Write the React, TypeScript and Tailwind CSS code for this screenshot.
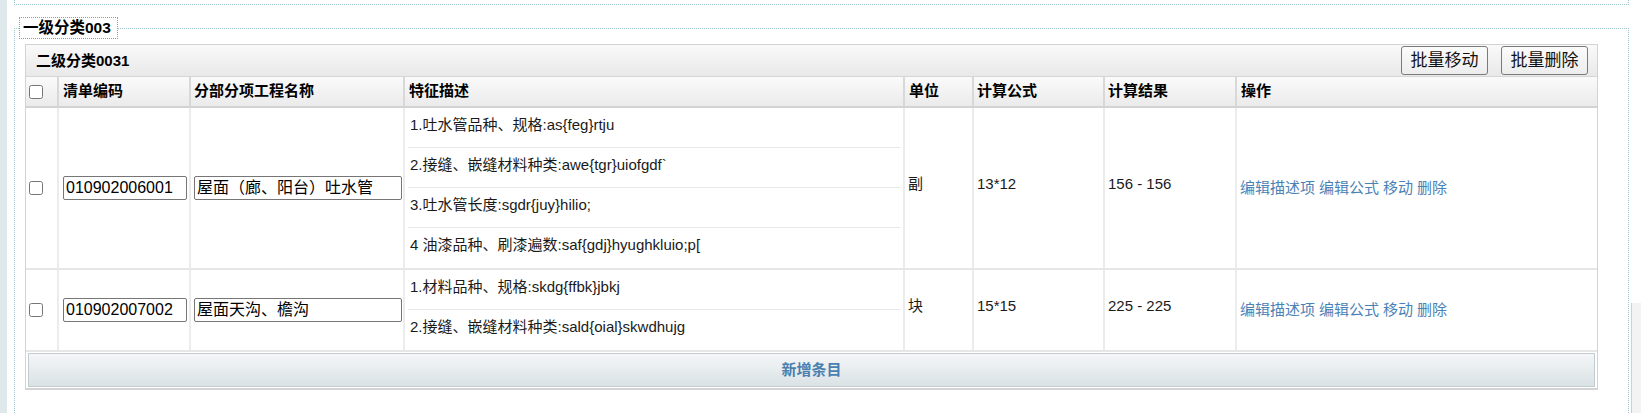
import React from 'react';

type Item = {
  code: string;
  name: string;
  desc: string[];
  unit: string;
  formula: string;
  result: string;
};

const items: Item[] = [
  {
    code: '010902006001',
    name: '屋面（廊、阳台）吐水管',
    desc: [
      '1.吐水管品种、规格:as{feg}rtju',
      '2.接缝、嵌缝材料种类:awe{tgr}uiofgdf`',
      '3.吐水管长度:sgdr{juy}hilio;',
      '4 油漆品种、刷漆遍数:saf{gdj}hyughkluio;p[',
    ],
    unit: '副',
    formula: '13*12',
    result: '156 - 156',
  },
  {
    code: '010902007002',
    name: '屋面天沟、檐沟',
    desc: ['1.材料品种、规格:skdg{ffbk}jbkj', '2.接缝、嵌缝材料种类:sald{oial}skwdhujg'],
    unit: '块',
    formula: '15*15',
    result: '225 - 225',
  },
];

function Check() {
  return <input type="checkbox" className="m-0 h-[14px] w-[14px] accent-[#777]" />;
}

function ToolButton({ label }: { label: string }) {
  return (
    <button className="h-[29px] w-[87px] rounded-[3px] border border-[#7a7a7a] bg-linear-to-b from-[#fbfbfb] to-[#ededed] text-[17px] leading-none text-[#111]">
      {label}
    </button>
  );
}

function HeaderRow() {
  const th = 'flex h-full items-center border-r-2 border-[#d8d8d8] font-bold';
  return (
    <div className="flex h-[31px] border-b-2 border-[#d3d3d3] bg-linear-to-b from-[#fafafa] to-[#ebebeb] text-[15px] text-black">
      <div className={`${th} w-[33px] pl-[3px]`}>
        <Check />
      </div>
      <div className={`${th} w-[132px] pl-[4px]`}>清单编码</div>
      <div className={`${th} w-[214px] pl-[3px]`}>分部分项工程名称</div>
      <div className={`${th} w-[500px] pl-[4px]`}>特征描述</div>
      <div className={`${th} w-[69px] pl-[4px]`}>单位</div>
      <div className={`${th} w-[131px] pl-[3px]`}>计算公式</div>
      <div className={`${th} w-[132px] pl-[3px]`}>计算结果</div>
      <div className="flex h-full w-[360px] items-center pl-[4px] font-bold">操作</div>
    </div>
  );
}

function DataRow({ item }: { item: Item }) {
  const td = 'flex items-center border-r-2 border-[#ececec]';
  return (
    <div className="flex border-b-2 border-[#e6e6e6] bg-white text-[15px] text-[#1a1a1a]">
      <div className={`${td} w-[33px] pl-[3px]`}>
        <Check />
      </div>
      <div className={`${td} w-[132px] pl-[4px]`}>
        <input
          readOnly
          value={item.code}
          className="h-[24px] w-[124px] rounded-[2px] border border-[#767676] px-[2px] text-[16px] text-black outline-none"
        />
      </div>
      <div className={`${td} w-[214px] pl-[3px]`}>
        <input
          readOnly
          value={item.name}
          className="h-[24px] w-[208px] rounded-[2px] border border-[#767676] px-[2px] text-[16px] text-black outline-none"
        />
      </div>
      <div className="flex w-[500px] flex-col border-r-2 border-[#ececec] px-[3px]">
        {item.desc.map((d, i) => (
          <div
            key={i}
            className={`h-[40px] pl-[2px] pt-[7px] leading-[20px] ${
              i < item.desc.length - 1 ? 'border-b border-[#e8e8e8]' : ''
            }`}
          >
            {d}
          </div>
        ))}
      </div>
      <div className={`${td} w-[69px] pb-[8px] pl-[3px]`}>{item.unit}</div>
      <div className={`${td} w-[131px] pb-[8px] pl-[3px]`}>{item.formula}</div>
      <div className={`${td} w-[132px] pb-[8px] pl-[3px]`}>{item.result}</div>
      <div className="flex w-[360px] items-center gap-[4px] pl-[3px] text-[#4b82b6]">
        <a className="cursor-pointer">编辑描述项</a>
        <a className="cursor-pointer">编辑公式</a>
        <a className="cursor-pointer">移动</a>
        <a className="cursor-pointer">删除</a>
      </div>
    </div>
  );
}

export default function App() {
  return (
    <div className="flex h-[413px] w-[1641px] overflow-hidden bg-white font-['Liberation_Sans','Noto_Sans_CJK_SC',sans-serif]">
      <div className="h-full w-[7px] shrink-0 bg-[#dfe9ec]" />

      <div className="w-[1624px] shrink-0 pl-[7px]">
        <div className="h-[5px] w-[1615px] border-x border-b border-dotted border-[#9fc3cd]" />

        <fieldset className="mt-[12px] w-[1615px] border border-dotted border-[#9fc3cd]">
          <legend className="ml-[4px] h-[22px] border border-dotted border-[#9a9a9a] bg-white pl-[3px] pr-[6px] text-[15.5px] font-bold leading-[20px] text-black">
            一级分类003
          </legend>

          <div className="ml-[10px] w-[1573px] pt-[5px]">
            <div className="border border-b-2 border-[#d3d3d3]">
              <div className="flex h-[32px] items-start justify-between border-b border-[#d6d6d6] bg-linear-to-b from-[#f9f9f9] to-[#e9e9e9] pr-[9px] pt-[1px]">
                <div className="self-center pl-[10px] text-[15px] font-bold text-black">二级分类0031</div>
                <div className="flex gap-[13px]">
                  <ToolButton label="批量移动" />
                  <ToolButton label="批量删除" />
                </div>
              </div>

              <HeaderRow />
              {items.map((item) => (
                <DataRow key={item.code} item={item} />
              ))}

              <div className="bg-white px-[2px] pb-[1px] pt-[1px]">
                <div className="flex h-[34px] items-center justify-center border border-[#c3ccd0] bg-linear-to-b from-[#f4f6f7] to-[#dae2e5] text-[15px] font-bold text-[#4a7fb0]">
                  新增条目
                </div>
              </div>
            </div>
          </div>
          <div className="h-[40px]" />
        </fieldset>
      </div>

      <div className="flex h-full w-[10px] shrink-0 flex-col bg-white">
        <div className="h-[303px]" />
        <div className="flex-1 border-l border-[#cfcfcf] bg-[#f3f3f3]" />
      </div>
    </div>
  );
}
